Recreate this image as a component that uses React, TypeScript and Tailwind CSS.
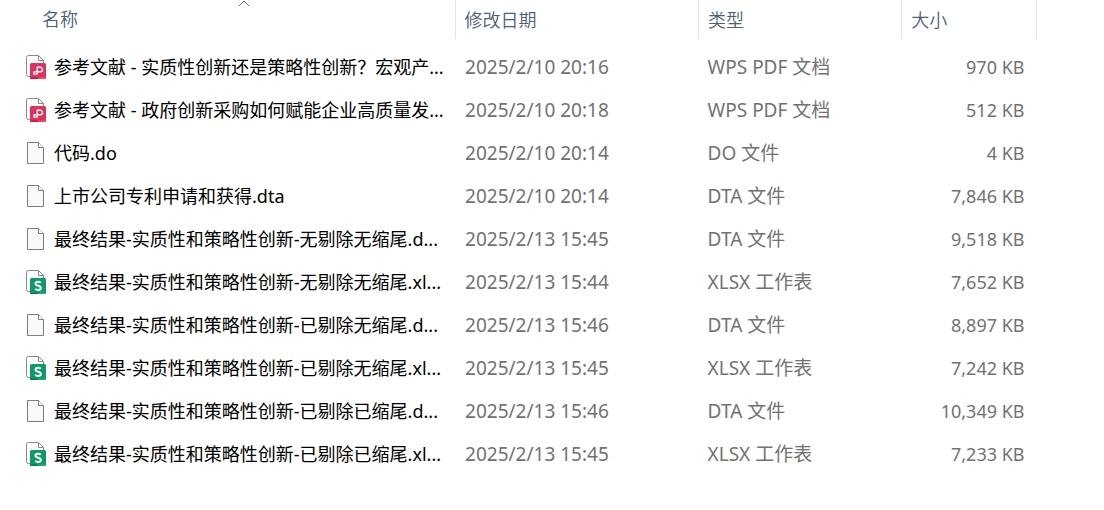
import React from "react";

type Kind = "pdf" | "sheet" | "blank";

const files: { kind: Kind; name: string; date: string; type: string; size: string }[] = [
  { kind: "pdf", name: "参考文献 - 实质性创新还是策略性创新？宏观产...", date: "2025/2/10 20:16", type: "WPS PDF 文档", size: "970 KB" },
  { kind: "pdf", name: "参考文献 - 政府创新采购如何赋能企业高质量发...", date: "2025/2/10 20:18", type: "WPS PDF 文档", size: "512 KB" },
  { kind: "blank", name: "代码.do", date: "2025/2/10 20:14", type: "DO 文件", size: "4 KB" },
  { kind: "blank", name: "上市公司专利申请和获得.dta", date: "2025/2/10 20:14", type: "DTA 文件", size: "7,846 KB" },
  { kind: "blank", name: "最终结果-实质性和策略性创新-无剔除无缩尾.d...", date: "2025/2/13 15:45", type: "DTA 文件", size: "9,518 KB" },
  { kind: "sheet", name: "最终结果-实质性和策略性创新-无剔除无缩尾.xl...", date: "2025/2/13 15:44", type: "XLSX 工作表", size: "7,652 KB" },
  { kind: "blank", name: "最终结果-实质性和策略性创新-已剔除无缩尾.d...", date: "2025/2/13 15:46", type: "DTA 文件", size: "8,897 KB" },
  { kind: "sheet", name: "最终结果-实质性和策略性创新-已剔除无缩尾.xl...", date: "2025/2/13 15:45", type: "XLSX 工作表", size: "7,242 KB" },
  { kind: "blank", name: "最终结果-实质性和策略性创新-已剔除已缩尾.d...", date: "2025/2/13 15:46", type: "DTA 文件", size: "10,349 KB" },
  { kind: "sheet", name: "最终结果-实质性和策略性创新-已剔除已缩尾.xl...", date: "2025/2/13 15:45", type: "XLSX 工作表", size: "7,233 KB" },
];

function FileIcon({ kind }: { kind: Kind }) {
  if (kind === "blank") {
    return (
      <svg width="22" height="26" viewBox="0 0 22 26" fill="none" className="shrink-0" aria-hidden="true">
        <path d="M1.5 2.5h11l5 5v16h-16z" fill="#f9f9f9" stroke="#7c7c7c" />
        <path d="M12.5 2.5v5h5" fill="#fff" stroke="#7c7c7c" />
      </svg>
    );
  }
  const pdf = kind === "pdf";
  return (
    <svg width="22" height="26" viewBox="0 0 22 26" fill="none" className="shrink-0" aria-hidden="true">
      <path d="M4 22.5H2.5a2 2 0 0 1-2-2v-17a2 2 0 0 1 2-2h10l5 5V10" fill="#fff" stroke="#8a8a8a" />
      <path d="M12.5 1.5v5h5" stroke="#8a8a8a" />
      <rect x="4" y="9" width="16" height="16" rx="1.5" fill={pdf ? "#e0315b" : "#109968"} />
      <path d="M4 23.5h8V25H5.5A1.5 1.5 0 0 1 4 23.5z" fill={pdf ? "#b71e45" : "#087a50"} />
      <path d="M12 23.5h8a1.5 1.5 0 0 1-1.5 1.5H12z" fill={pdf ? "#ff4a62" : "#1aae7a"} />
      {pdf ? (
        <path
          d="M11.3 15.8v-2.6h2.9a2.3 2.3 0 0 1 0 4.6H8.9a1.3 1.3 0 0 0 0 2.6h.9a1.5 1.5 0 0 0 1.5-1.5v-3.1"
          stroke="#fff"
          strokeWidth="1.4"
        />
      ) : (
        <path
          d="M14.7 13.7c-.7-.7-1.6-1-2.7-1-1.5 0-2.5.7-2.5 1.9 0 2.9 5.3 1.5 5.3 4.3 0 1.3-1.1 2-2.7 2-1.2 0-2.2-.3-2.9-1"
          stroke="#fff"
          strokeWidth="2"
        />
      )}
    </svg>
  );
}

export default function App() {
  return (
    <main className="bg-white pr-[67px] font-['Noto_Sans','Noto_Sans_CJK_SC',sans-serif] text-lg leading-6 text-[#727272]">
      <table className="w-full table-fixed border-collapse">
        <colgroup>
          <col className="w-[43.9%]" />
          <col className="w-[23.5%]" />
          <col className="w-[19.6%]" />
          <col className="w-[13%]" />
        </colgroup>
        <thead>
          <tr className="h-[39px] text-left text-[#4c607a]">
            <th className="border-r border-[#e5e5e5] p-0 font-[350]" aria-sort="ascending">
              <button className="grid h-[39px] w-full grid-cols-[1fr_auto_1fr] items-start pl-[42px] pr-2 text-left">
                <span className="pt-[7px]">名称</span>
                <svg width="12" height="8" viewBox="0 0 12 8" fill="none" aria-hidden="true">
                  <path d="M1 6 6 1l5 5" stroke="#6b6b6b" />
                </svg>
              </button>
            </th>
            <th className="border-r border-[#e5e5e5] p-0 font-[350]">
              <button className="w-full pl-[9px] text-left">修改日期</button>
            </th>
            <th className="border-r border-[#e5e5e5] p-0 font-[350]">
              <button className="w-full pl-[9px] text-left">类型</button>
            </th>
            <th className="border-r border-[#e5e5e5] p-0 font-[350]">
              <button className="w-full pl-[9px] text-left">大小</button>
            </th>
          </tr>
        </thead>
        <tbody className="before:block before:h-[6px]">
          {files.map((f) => (
            <tr key={f.name} className="h-[43px]">
              <td className="p-0 pl-[26px]">
                <div className="flex items-center gap-[6px] text-black">
                  <FileIcon kind={f.kind} />
                  <span className="whitespace-nowrap">{f.name}</span>
                </div>
              </td>
              <td className="p-0 pl-[10px] text-[19px] whitespace-nowrap">{f.date}</td>
              <td className="p-0 pl-[9px] text-[19px] whitespace-nowrap">{f.type}</td>
              <td className="p-0 pr-3 text-right whitespace-nowrap">{f.size}</td>
            </tr>
          ))}
        </tbody>
      </table>
    </main>
  );
}
